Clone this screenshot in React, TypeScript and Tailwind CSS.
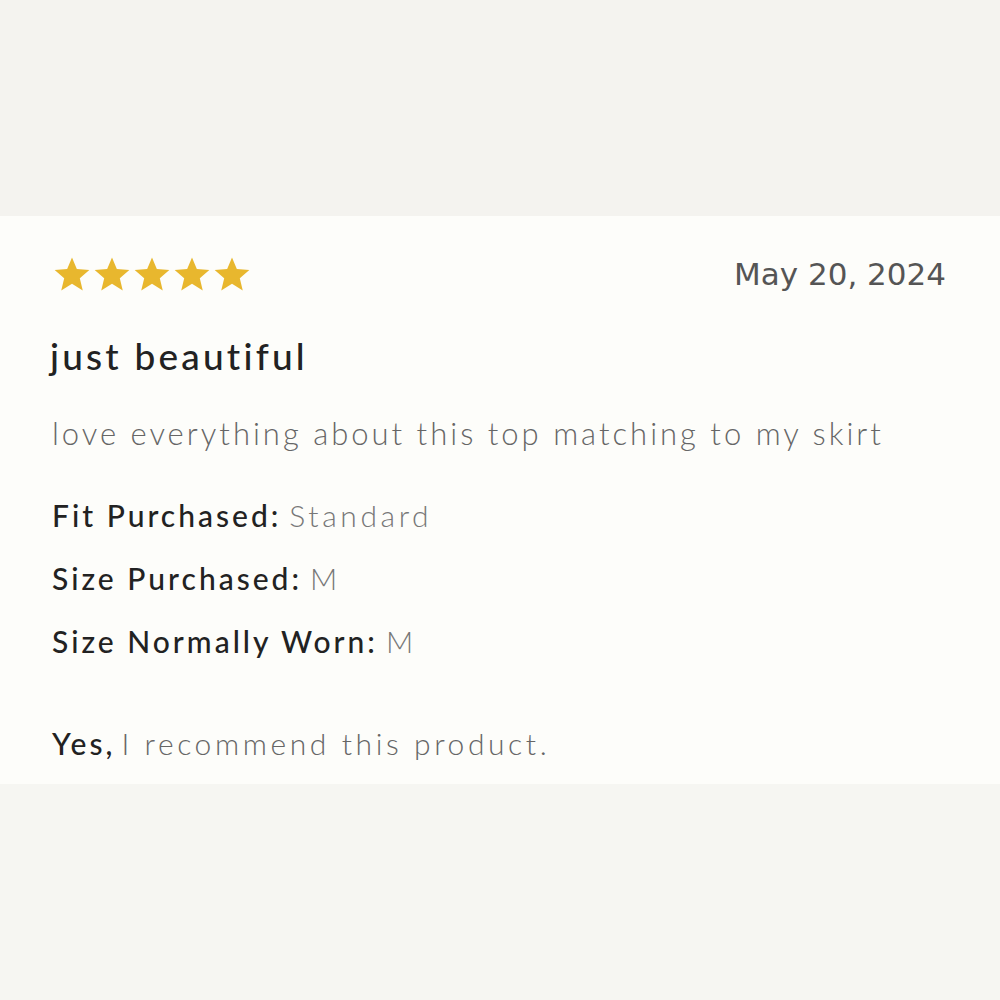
import React from "react";

const sans = { fontFamily: "Lato, 'Open Sans', sans-serif" };

function Star() {
  return (
    <svg viewBox="0 0 24 24" className="h-[38px] w-[40px]">
      <path
        d="M12 1.6l3.05 7.3 7.9.6-6.02 5.15 1.86 7.7L12 18.2l-6.79 4.15 1.86-7.7L1.05 9.5l7.9-.6z"
        fill="#e8b72e"
      />
    </svg>
  );
}

function Detail({ label, value }: { label: string; value: string }) {
  return (
    <div className="flex items-baseline text-[30px] leading-[63px] tracking-[3px]">
      <span className="font-medium text-[#222222]">{label}</span>
      <span className="ml-[8px] font-light tracking-[3.6px] text-[#777777]">{value}</span>
    </div>
  );
}

export default function App() {
  return (
    <div className="flex h-[1000px] w-[1000px] flex-col bg-[#f5f4f0]" style={sans}>
      <div className="h-[216px] bg-[#f4f3ef]" />
      <div className="flex h-[568px] flex-col bg-[#fdfdfa] px-[52px] pt-[35px]">
        <div className="flex items-center justify-between">
          <div className="flex">
            {[0, 1, 2, 3, 4].map((i) => (
              <Star key={i} />
            ))}
          </div>
          <span
            className="mr-[2px] text-[31px] text-[#555555]"
            style={{ fontFamily: "'DejaVu Sans', sans-serif" }}
          >
            May 20, 2024
          </span>
        </div>
        <h2 className="mt-[34px] -ml-[2px] text-[37px] font-medium leading-[48px] tracking-[3.2px] text-[#222222]">
          just beautiful
        </h2>
        <p className="mt-[33px] text-[31px] font-light leading-[40px] tracking-[3px] text-[#666666]">
          love everything about this top matching to my skirt
        </p>
        <div className="mt-[31px] flex flex-col">
          <Detail label="Fit Purchased:" value="Standard" />
          <Detail label="Size Purchased:" value="M" />
          <Detail label="Size Normally Worn:" value="M" />
        </div>
        <p className="mt-[50px] text-[30px] leading-[40px] tracking-[3px]">
          <span className="font-medium text-[#222222]">Yes,</span>
          <span className="ml-[6px] font-light tracking-[3.6px] text-[#666666]">
            I recommend this product.
          </span>
        </p>
      </div>
      <div className="flex-1 bg-[#f6f6f2]" />
    </div>
  );
}
